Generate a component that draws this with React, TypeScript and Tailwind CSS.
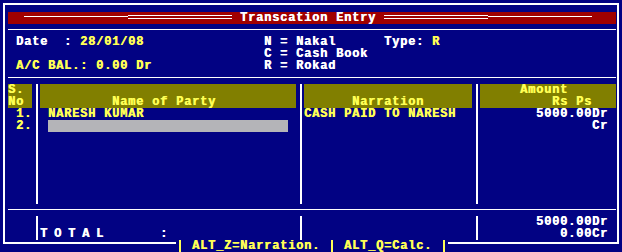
import React from "react";

function Single() {
  return <div className="w-[104px] mt-[4px] h-px bg-white" />;
}

function Double() {
  return <div className="w-[104px] mt-[3px] h-[4px] border-y border-white" />;
}

function Bar() {
  return (
    <span className="w-[8px] flex justify-center">
      <span className="w-[2px] bg-[#ffff55]" />
    </span>
  );
}

export default function App() {
  return (
    <div className="w-[622px] h-[252px] overflow-hidden bg-[#020283] font-['Liberation_Mono',monospace] font-bold text-[12px] leading-[12px] tracking-[0.8px] text-white [text-shadow:0.6px_0_currentColor]">
      <div className="grid w-[624px] grid-cols-[repeat(78,8px)] grid-rows-[repeat(21,12px)]">
        {/* outer frame */}
        <div className="col-[1/79] row-[1/22] mt-[3px] ml-[3px] mr-[5px] mb-[8px] border-2 border-white" />

        {/* title bar */}
        <div className="col-[2/78] row-[2/3] bg-[#a00000] flex pl-[16px]">
          <Single />
          <Double />
          <span className="px-[8px] whitespace-pre">Transcation Entry</span>
          <Double />
          <Single />
        </div>

        <div className="col-[2/78] row-[3/4] pt-[5px]">
          <div className="h-px bg-white" />
        </div>

        {/* header info */}
        <div className="col-[3/30] row-[4/5] whitespace-pre">
          Date  : <span className="text-[#ffff55]">28/01/08</span>
        </div>
        <div className="col-[3/30] row-[6/7] whitespace-pre text-[#ffff55]">A/C BAL.: 0.00 Dr</div>
        <div className="col-[34/48] row-[4/5] whitespace-pre">N = Nakal</div>
        <div className="col-[34/48] row-[5/6] whitespace-pre">C = Cash Book</div>
        <div className="col-[34/48] row-[6/7] whitespace-pre">R = Rokad</div>
        <div className="col-[49/60] row-[4/5] whitespace-pre">
          Type: <span className="text-[#ffff55]">R</span>
        </div>

        <div className="col-[2/78] row-[7/8] pt-[5px]">
          <div className="h-px bg-white" />
        </div>

        {/* table header */}
        <div className="col-[2/5] row-[8/10] bg-[#817f00] text-[#ffff55] whitespace-pre flex flex-col">
          <span>S.</span>
          <span>No</span>
        </div>
        <div className="col-[6/38] row-[8/10] bg-[#817f00] text-[#ffff55] whitespace-pre pt-[12px] pl-[72px]">Name of Party</div>
        <div className="col-[39/60] row-[8/10] bg-[#817f00] text-[#ffff55] whitespace-pre pt-[12px] pl-[48px]">Narration</div>
        <div className="col-[61/78] row-[8/10] bg-[#817f00] text-[#ffff55] whitespace-pre flex flex-col">
          <span className="pl-[40px]">Amount</span>
          <span className="pl-[72px]">Rs Ps</span>
        </div>

        {/* column separators */}
        <div className="col-[5/6] row-[8/18] ml-[4px] w-[2px] bg-white" />
        <div className="col-[38/39] row-[8/18] ml-[4px] w-[2px] bg-white" />
        <div className="col-[60/61] row-[8/18] ml-[4px] w-[2px] bg-white" />

        {/* rows */}
        <div className="col-[3/5] row-[10/11] text-[#ffff55] whitespace-pre">1.</div>
        <div className="col-[3/5] row-[11/12] text-[#ffff55] whitespace-pre">2.</div>
        <div className="col-[7/37] row-[10/11] text-[#ffff55] whitespace-pre">NARESH KUMAR</div>
        <div className="col-[7/37] row-[11/12] bg-[#b4b4b8]" />
        <div className="col-[39/60] row-[10/11] text-[#ffff55] whitespace-pre">CASH PAID TO NARESH</div>
        <div className="col-[61/77] row-[10/11] text-right whitespace-pre">5000.00Dr</div>
        <div className="col-[61/77] row-[11/12] text-right whitespace-pre">Cr</div>

        <div className="col-[2/78] row-[18/19] pt-[5px]">
          <div className="h-px bg-white" />
        </div>

        {/* totals */}
        <div className="col-[5/6] row-[19/21] ml-[4px] w-[2px] bg-white" />
        <div className="col-[38/39] row-[19/21] ml-[4px] w-[2px] bg-white" />
        <div className="col-[60/61] row-[19/21] ml-[4px] w-[2px] bg-white" />
        <div className="col-[6/21] row-[20/21] whitespace-pre tracking-[6.8px]">TOTAL</div>
        <div className="col-[21/22] row-[20/21] whitespace-pre">:</div>
        <div className="col-[61/77] row-[19/20] text-right whitespace-pre">5000.00Dr</div>
        <div className="col-[61/77] row-[20/21] text-right whitespace-pre">0.00Cr</div>

        {/* footer hint */}
        <div className="col-[23/57] row-[21/22] bg-[#020283] text-[#ffff55] whitespace-pre flex">
          <Bar />
          <span> ALT_Z=Narration. </span>
          <Bar />
          <span> ALT_Q=Calc. </span>
          <Bar />
        </div>
      </div>
    </div>
  );
}
